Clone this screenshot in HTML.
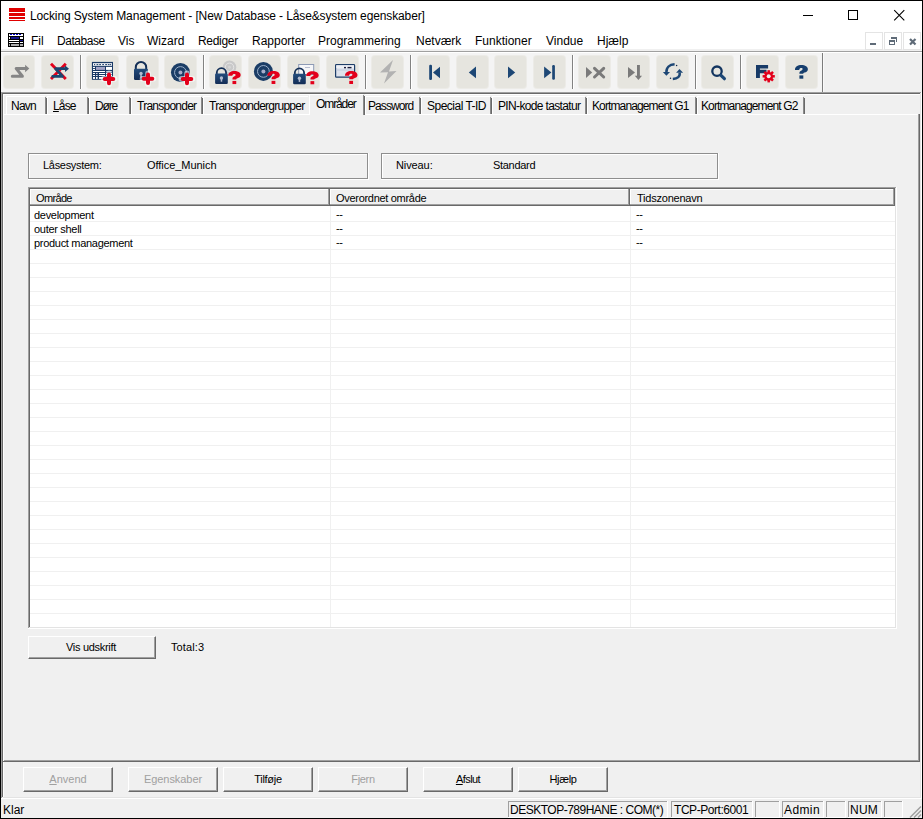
<!DOCTYPE html>
<html><head><meta charset="utf-8">
<style>
*{box-sizing:border-box}
html,body{margin:0;padding:0;width:923px;height:819px;overflow:hidden;background:#f0f0f0}
body{position:relative;font-family:"Liberation Sans",sans-serif;color:#000}
.a{position:absolute}
.t{position:absolute;white-space:pre;font-size:12px;line-height:14px}
.s{position:absolute;white-space:pre;font-size:11px;line-height:13px;letter-spacing:-0.3px}
.u{text-decoration:underline}
.gray{color:#a0a0a0}
.tb{position:absolute;top:56px;width:31px;height:32px;background:#e6e5df;border-radius:3px;box-shadow:0 0 0 1px #ecebe7}
.tb svg{position:absolute;left:0;top:0}
.sep{position:absolute;top:55px;width:1px;height:34px;background:#828282}
.tab{position:absolute;top:96px;height:18px;border-left:1px solid #fff;border-top:1px solid #fff}
.tab:after{content:"";position:absolute;right:-1px;top:0;width:2px;height:17px;background:linear-gradient(to right,#a0a0a0 0,#a0a0a0 1px,#696969 1px)}
.btn{position:absolute;background:#f0f0f0;border-top:1px solid #fff;border-left:1px solid #fff;border-right:1px solid #696969;border-bottom:1px solid #696969;box-shadow:inset -1px -1px 0 #a0a0a0}
</style></head><body>

<!-- window frame -->
<div class="a" style="left:0;top:0;width:923px;height:819px;border:1px solid #000;"></div>
<!-- title + menu white -->
<div class="a" style="left:1px;top:1px;width:921px;height:48px;background:#fff"></div>
<div class="a" style="left:1px;top:51px;width:921px;height:1px;background:#a0a0a0"></div>
<div class="a" style="left:1px;top:52px;width:921px;height:1px;background:#fff"></div>

<!-- logo -->
<div class="a" style="left:9px;top:8px;width:16px;height:4px;background:#e00000"></div>
<div class="a" style="left:9px;top:13px;width:16px;height:3px;background:#e00000"></div>
<div class="a" style="left:9px;top:17px;width:16px;height:2px;background:#e00000"></div>
<div class="a" style="left:9px;top:20px;width:16px;height:1px;background:#e00000"></div>
<div class="t" style="left:30px;top:9px;letter-spacing:-0.12px">Locking System Management - [New Database - Låse&amp;system egenskaber]</div>

<!-- window controls -->
<div class="a" style="left:803px;top:15px;width:10px;height:1px;background:#000"></div>
<div class="a" style="left:848px;top:10px;width:10px;height:10px;border:1px solid #000"></div>
<svg class="a" style="left:893px;top:9px" width="13" height="13" viewBox="0 0 13 13"><path d="M1.2 1.2L11.3 11.3M11.3 1.2L1.2 11.3" stroke="#000" stroke-width="1.1"/></svg>

<!-- menu icon -->
<svg class="a" style="left:8px;top:33px" width="16" height="14" viewBox="0 0 16 14" shape-rendering="crispEdges">
<rect x="0" y="0" width="16" height="14" fill="#000"/>
<rect x="1" y="1" width="14" height="2" fill="#fff"/>
<rect x="2" y="1" width="2" height="1" fill="#0000c8"/><rect x="5" y="1" width="2" height="1" fill="#0000c8"/><rect x="8" y="1" width="2" height="1" fill="#0000c8"/><rect x="11" y="1" width="2" height="1" fill="#0000c8"/>
<rect x="1" y="4" width="1" height="2" fill="#fff"/><rect x="3" y="4" width="8" height="2" fill="#14148c"/><rect x="12" y="4" width="3" height="2" fill="#fff"/>
<rect x="1" y="7" width="10" height="1" fill="#fff"/><rect x="12" y="7" width="3" height="1" fill="#14148c"/>
<rect x="1" y="9" width="10" height="1" fill="#fff"/><rect x="12" y="9" width="3" height="1" fill="#fff"/>
<rect x="1" y="11" width="1" height="2" fill="#aaa"/><rect x="3" y="11" width="8" height="2" fill="#aaa"/><rect x="12" y="11" width="3" height="2" fill="#aaa"/>
</svg>

<!-- menu -->
<div class="t" style="left:31px;top:34px">Fil</div>
<div class="t" style="left:57px;top:34px;letter-spacing:-0.45px">Database</div>
<div class="t" style="left:118px;top:34px">Vis</div>
<div class="t" style="left:147px;top:34px">Wizard</div>
<div class="t" style="left:198px;top:34px;letter-spacing:-0.3px">Rediger</div>
<div class="t" style="left:252px;top:34px">Rapporter</div>
<div class="t" style="left:318px;top:34px">Programmering</div>
<div class="t" style="left:416px;top:34px">Netværk</div>
<div class="t" style="left:475px;top:34px">Funktioner</div>
<div class="t" style="left:546px;top:34px">Vindue</div>
<div class="t" style="left:597px;top:34px">Hjælp</div>

<!-- MDI buttons -->
<div class="a" style="left:865px;top:32px;width:18px;height:18px;border:1px solid #e4e4e4;background:#fff"></div>
<div class="a" style="left:884px;top:32px;width:18px;height:18px;border:1px solid #e4e4e4;background:#fff"></div>
<div class="a" style="left:903px;top:32px;width:18px;height:18px;border:1px solid #e4e4e4;background:#fff"></div>
<div class="a" style="left:870px;top:43px;width:6px;height:2px;background:#5f6b78"></div>
<svg class="a" style="left:884px;top:32px" width="18" height="18" viewBox="0 0 18 18" shape-rendering="crispEdges"><rect x="7" y="5" width="6" height="2" fill="#5f6b78"/><rect x="12" y="5" width="1" height="5" fill="#5f6b78"/><rect x="5" y="8" width="6" height="2" fill="#5f6b78"/><rect x="5" y="8" width="1" height="5" fill="#5f6b78"/><rect x="10" y="8" width="1" height="5" fill="#5f6b78"/><rect x="5" y="12" width="6" height="1" fill="#5f6b78"/></svg>
<svg class="a" style="left:903px;top:32px" width="18" height="18" viewBox="0 0 18 18"><path d="M7 7L12.5 12.5M12.5 7L7 12.5" stroke="#5f6b78" stroke-width="2.2"/></svg>

<!-- toolbar area -->
<div class="a" style="left:1px;top:53px;width:821px;height:39px;background:#f4f4f4"></div>
<div class="a" style="left:822px;top:53px;width:1px;height:39px;background:#7c7c7c"></div><div class="a" style="left:823px;top:53px;width:1px;height:39px;background:#fafafa"></div>

<!-- MDI client sunken edge -->
<div class="a" style="left:1px;top:92px;width:921px;height:1px;background:#a0a0a0"></div>
<div class="a" style="left:2px;top:93px;width:919px;height:1px;background:#696969"></div>
<div class="a" style="left:1px;top:92px;width:1px;height:706px;background:#a0a0a0"></div>
<div class="a" style="left:2px;top:93px;width:1px;height:704px;background:#696969"></div>
<div class="a" style="left:3px;top:94px;width:918px;height:1px;background:#fff"></div>
<div class="a" style="left:3px;top:94px;width:1px;height:703px;background:#fff"></div>
<div class="a" style="left:921px;top:92px;width:1px;height:707px;background:#fff"></div>
<div class="a" style="left:920px;top:93px;width:1px;height:705px;background:#e3e3e3"></div>
<div class="a" style="left:3px;top:797px;width:918px;height:1px;background:#e3e3e3"></div>
<div class="a" style="left:1px;top:798px;width:921px;height:1px;background:#fff"></div>

<!-- TOOLBAR BUTTONS -->
<div class="tb" style="left:4px;width:30px"></div><svg class="a" style="left:4px;top:56px" width="31" height="32" viewBox="0 0 31 32"><path d="M8.3 20.3H18.4L12.2 12.5H22" fill="none" stroke="#858585" stroke-width="3" stroke-linecap="round" stroke-linejoin="round"/><path d="M21.1 8.8L25.3 12.5L21.1 16.2Z" fill="#858585"/></svg>
<div class="tb" style="left:42px"></div><svg class="a" style="left:42px;top:56px" width="31" height="32" viewBox="0 0 31 32"><path d="M9 7.8L23.8 23M23.8 7.8L9 23" stroke="#e3001b" stroke-width="2.9"/><path d="M10.7 20.4H20.5L13.5 12.6H23.5" fill="none" stroke="#1b466f" stroke-width="2.8" stroke-linecap="round" stroke-linejoin="round"/><path d="M23 9.4L27 12.7L23 16Z" fill="#1b466f"/></svg>
<div class="tb" style="left:87px"></div><svg class="a" style="left:87px;top:56px" width="31" height="32" viewBox="0 0 31 32"><rect x="4.9" y="5.9" width="21.1" height="17.9" fill="#1a3a66"/><rect x="6" y="7.2" width="19" height="2.6" fill="#fff"/><rect x="7" y="8.1" width="1.2" height="1" fill="#1a3a66"/><rect x="9.5" y="8.1" width="1.8" height="1" fill="#1a3a66"/><rect x="12.2" y="8.1" width="1.8" height="1" fill="#1a3a66"/><rect x="15.2" y="8.1" width="1.8" height="1" fill="#1a3a66"/><rect x="18.2" y="8.1" width="1.8" height="1" fill="#1a3a66"/><rect x="20.8" y="8.1" width="1.8" height="1" fill="#1a3a66"/><rect x="23" y="8.1" width="1.2" height="1" fill="#1a3a66"/><rect x="6" y="10.9" width="2" height="1.1" fill="#fff"/><rect x="6" y="12.9" width="2" height="1.1" fill="#fff"/><rect x="9" y="10.9" width="9" height="3" fill="#a3a4c6"/><rect x="19" y="10.9" width="6" height="3" fill="#fff"/><rect x="6" y="15" width="12" height="1" fill="#fff"/><rect x="19" y="15" width="6" height="1" fill="#a5a8c0"/><rect x="6" y="17" width="2" height="1" fill="#fff"/><rect x="9" y="17" width="1.6" height="1" fill="#dcdce8"/><rect x="12" y="17" width="6" height="1" fill="#fff"/><rect x="19" y="17" width="6" height="1" fill="#fff"/><rect x="6" y="19" width="2" height="1" fill="#fff"/><rect x="9" y="19" width="1.6" height="1" fill="#dcdce8"/><rect x="12" y="19" width="6" height="1" fill="#fff"/><rect x="19" y="19" width="6" height="1" fill="#fff"/><rect x="6" y="21" width="2" height="1.9" fill="#fff"/><rect x="9" y="21" width="1.6" height="1.9" fill="#fff"/><rect x="12" y="21" width="6" height="1.9" fill="#fff"/><rect x="19" y="21" width="6" height="1.9" fill="#fff"/><path d="M16.5 22.9h11M22 17.4v11" stroke="#fff" stroke-width="5.6" stroke-linecap="round" opacity=".55"/><path d="M17.7 22.9h8.6M22 18.599999999999998v8.6" stroke="#e3001b" stroke-width="4" stroke-linecap="round"/></svg>
<div class="tb" style="left:127px"></div><svg class="a" style="left:127px;top:56px" width="31" height="32" viewBox="0 0 31 32"><path d="M8.8 13.2V11.2A5.2 5.2 0 0 1 19.2 11.2V13.2" fill="none" stroke="#132f57" stroke-width="2.0"/><linearGradient id="lg70127" x1="0" y1="0" x2="0" y2="1"><stop offset="0" stop-color="#234c7c"/><stop offset="1" stop-color="#132d55"/></linearGradient><rect x="7" y="12.7" width="14" height="11.3" rx="1.2" fill="url(#lg70127)"/><circle cx="14.0" cy="17.558999999999997" r="1.7" fill="#b4bccf"/><rect x="13.25" y="17.785" width="1.5" height="3.7290000000000005" fill="#b4bccf"/><path d="M15.5 22.8h11M21 17.3v11" stroke="#fff" stroke-width="5.6" stroke-linecap="round" opacity=".55"/><path d="M16.7 22.8h8.6M21 18.5v8.6" stroke="#e3001b" stroke-width="4" stroke-linecap="round"/></svg>
<div class="tb" style="left:165px"></div><svg class="a" style="left:165px;top:56px" width="31" height="32" viewBox="0 0 31 32"><circle cx="15.45" cy="16.5" r="9.5" fill="#1b3d66"/><circle cx="15.45" cy="16.5" r="5.89" fill="none" stroke="#9cb0ca" stroke-width="1"/><circle cx="15.45" cy="16.5" r="1.9949999999999999" fill="#a9aecb"/><path d="M16.5 22.9h11M22 17.4v11" stroke="#fff" stroke-width="5.6" stroke-linecap="round" opacity=".55"/><path d="M17.7 22.9h8.6M22 18.599999999999998v8.6" stroke="#e3001b" stroke-width="4" stroke-linecap="round"/></svg>
<div class="tb" style="left:210px"></div><svg class="a" style="left:210px;top:56px" width="31" height="32" viewBox="0 0 31 32"><circle cx="19.5" cy="11.3" r="6.8" fill="#c9c9c9"/><circle cx="19.5" cy="11.3" r="4.216" fill="none" stroke="#e6e6e6" stroke-width="1"/><circle cx="19.5" cy="11.3" r="1.428" fill="#d6d6d6"/><path d="M6.8 18.1V16.85A4.6499999999999995 4.6499999999999995 0 0 1 16.099999999999998 16.85V18.1" fill="none" stroke="#132f57" stroke-width="1.8"/><linearGradient id="lg51176" x1="0" y1="0" x2="0" y2="1"><stop offset="0" stop-color="#234c7c"/><stop offset="1" stop-color="#132d55"/></linearGradient><rect x="5.1" y="17.6" width="12.7" height="10.4" rx="1.2" fill="url(#lg51176)"/><circle cx="11.45" cy="22.072000000000003" r="1.7" fill="#b4bccf"/><rect x="10.7" y="22.28" width="1.5" height="3.4320000000000004" fill="#b4bccf"/><g transform="translate(18.2,15) scale(0.97,0.955)"><path d="M0 5C-0.2 1.8 2.8 0 6.3 0C10.2 0 12.9 1.7 12.9 4.2C12.9 6.2 11.3 7.1 9.6 7.6C8.6 7.9 8.3 8.2 8.3 8.8H4.4V8C4.4 6.6 5.2 6 6.5 5.4C7.3 5 7.6 4.6 7.6 4.1C7.6 3.5 7.1 3.1 6.3 3.1C5.2 3.1 4.4 3.7 4.2 5Z" fill="#e3001b"/><rect x="4.4" y="10.4" width="3.9" height="3.3" fill="#e3001b"/></g></svg>
<div class="tb" style="left:249px"></div><svg class="a" style="left:249px;top:56px" width="31" height="32" viewBox="0 0 31 32"><circle cx="14.4" cy="15.4" r="9.5" fill="#1b3d66"/><circle cx="14.4" cy="15.4" r="5.89" fill="none" stroke="#9cb0ca" stroke-width="1"/><circle cx="14.4" cy="15.4" r="1.9949999999999999" fill="#a9aecb"/><g transform="translate(18.3,14.9) scale(0.97,0.955)"><path d="M0 5C-0.2 1.8 2.8 0 6.3 0C10.2 0 12.9 1.7 12.9 4.2C12.9 6.2 11.3 7.1 9.6 7.6C8.6 7.9 8.3 8.2 8.3 8.8H4.4V8C4.4 6.6 5.2 6 6.5 5.4C7.3 5 7.6 4.6 7.6 4.1C7.6 3.5 7.1 3.1 6.3 3.1C5.2 3.1 4.4 3.7 4.2 5Z" fill="#e3001b"/><rect x="4.4" y="10.4" width="3.9" height="3.3" fill="#e3001b"/></g></svg>
<div class="tb" style="left:288px"></div><svg class="a" style="left:288px;top:56px" width="31" height="32" viewBox="0 0 31 32"><rect x="10.7" y="8.5" width="15" height="10" fill="#f6f6f8" stroke="#8d9ab5" stroke-width="1"/><rect x="17" y="11" width="5" height="1" fill="#b8bdd0"/><path d="M6.8 18.3V17.05A4.6499999999999995 4.6499999999999995 0 0 1 16.099999999999998 17.05V18.3" fill="none" stroke="#132f57" stroke-width="1.8"/><linearGradient id="lg51178" x1="0" y1="0" x2="0" y2="1"><stop offset="0" stop-color="#234c7c"/><stop offset="1" stop-color="#132d55"/></linearGradient><rect x="5.1" y="17.8" width="12.7" height="10.4" rx="1.2" fill="url(#lg51178)"/><circle cx="11.45" cy="22.272000000000002" r="1.7" fill="#b4bccf"/><rect x="10.7" y="22.48" width="1.5" height="3.4320000000000004" fill="#b4bccf"/><g transform="translate(18.2,15.2) scale(0.97,0.955)"><path d="M0 5C-0.2 1.8 2.8 0 6.3 0C10.2 0 12.9 1.7 12.9 4.2C12.9 6.2 11.3 7.1 9.6 7.6C8.6 7.9 8.3 8.2 8.3 8.8H4.4V8C4.4 6.6 5.2 6 6.5 5.4C7.3 5 7.6 4.6 7.6 4.1C7.6 3.5 7.1 3.1 6.3 3.1C5.2 3.1 4.4 3.7 4.2 5Z" fill="#e3001b"/><rect x="4.4" y="10.4" width="3.9" height="3.3" fill="#e3001b"/></g></svg>
<div class="tb" style="left:327px"></div><svg class="a" style="left:327px;top:56px" width="31" height="32" viewBox="0 0 31 32"><rect x="8.6" y="8.6" width="19" height="12.6" rx="0.8" fill="#dde2ec" stroke="#1d3d68" stroke-width="1.2"/><rect x="9.3" y="9.3" width="17.6" height="2.8" fill="#eef0f5"/><rect x="9.3" y="13.5" width="17.6" height="1" fill="#c2cadb"/><rect x="17" y="10.9" width="2" height="1.4" fill="#1a1a3a"/><rect x="20.5" y="10.9" width="4" height="1.4" fill="#1a1a3a"/><g transform="translate(18,14.9) scale(0.97,0.955)"><path d="M0 5C-0.2 1.8 2.8 0 6.3 0C10.2 0 12.9 1.7 12.9 4.2C12.9 6.2 11.3 7.1 9.6 7.6C8.6 7.9 8.3 8.2 8.3 8.8H4.4V8C4.4 6.6 5.2 6 6.5 5.4C7.3 5 7.6 4.6 7.6 4.1C7.6 3.5 7.1 3.1 6.3 3.1C5.2 3.1 4.4 3.7 4.2 5Z" fill="#e3001b"/><rect x="4.4" y="10.4" width="3.9" height="3.3" fill="#e3001b"/></g></svg>
<div class="tb" style="left:372px"></div><svg class="a" style="left:372px;top:56px" width="31" height="32" viewBox="0 0 31 32"><path d="M21 4L8 16.5L16 16.2L12 27.5L24.5 15L17 15.4Z" fill="#b2b2b2"/></svg>
<div class="tb" style="left:418px"></div><svg class="a" style="left:418px;top:56px" width="31" height="32" viewBox="0 0 31 32"><rect x="11.2" y="8.8" width="2.8" height="15.2" rx="1.2" fill="#1d4775"/><path d="M15 16.5L22 10.8V22.2Z" fill="#1d4775"/></svg>
<div class="tb" style="left:457px"></div><svg class="a" style="left:457px;top:56px" width="31" height="32" viewBox="0 0 31 32"><path d="M11.8 16.5L19 10.6V22.3Z" fill="#1d4775"/></svg>
<div class="tb" style="left:495px"></div><svg class="a" style="left:495px;top:56px" width="31" height="32" viewBox="0 0 31 32"><path d="M13 10.6L20.2 16.5L13 22.3Z" fill="#1d4775"/></svg>
<div class="tb" style="left:534px"></div><svg class="a" style="left:534px;top:56px" width="31" height="32" viewBox="0 0 31 32"><path d="M10.1 10.6L17.4 16.5L10.1 22.3Z" fill="#1d4775"/><rect x="18.2" y="9.1" width="2.7" height="14.6" rx="1.2" fill="#1d4775"/></svg>
<div class="tb" style="left:579px"></div><svg class="a" style="left:579px;top:56px" width="31" height="32" viewBox="0 0 31 32"><path d="M7 11L13.2 16.5L7 22Z" fill="#7a7a7a"/><path d="M15.5 12.3L24.7 21M24.7 12.3L15.5 21" stroke="#7a7a7a" stroke-width="3" stroke-linecap="round"/></svg>
<div class="tb" style="left:618px"></div><svg class="a" style="left:618px;top:56px" width="31" height="32" viewBox="0 0 31 32"><path d="M10 11L17 16.5L10 22Z" fill="#7a7a7a"/><rect x="19" y="9" width="2.9" height="11.5" fill="#7a7a7a"/><path d="M16.8 19.8H24L20.45 24Z" fill="#7a7a7a"/></svg>
<div class="tb" style="left:657px"></div><svg class="a" style="left:657px;top:56px" width="31" height="32" viewBox="0 0 31 32"><path d="M17.6 8.3C12.6 8.6 9.1 11.4 9.4 16.4" fill="none" stroke="#1d4775" stroke-width="2.5"/><path d="M5.9 16.1H13L9.4 19.8Z" fill="#1d4775"/><path d="M15.8 23C20.6 22.6 23.4 20.3 22.6 16.8" fill="none" stroke="#1d4775" stroke-width="2.5"/><path d="M19.1 16.8H26.1L22.5 13Z" fill="#1d4775"/><circle cx="19.6" cy="9.4" r=".75" fill="#12284a"/><circle cx="13.5" cy="22.3" r=".75" fill="#12284a"/></svg>
<div class="tb" style="left:702px"></div><svg class="a" style="left:702px;top:56px" width="31" height="32" viewBox="0 0 31 32"><circle cx="15" cy="15.2" r="4.7" fill="none" stroke="#12345f" stroke-width="2.3"/><path d="M19 19.3L22.4 22.7" stroke="#1d4775" stroke-width="3.2" stroke-linecap="round"/></svg>
<div class="tb" style="left:747px"></div><svg class="a" style="left:747px;top:56px" width="31" height="32" viewBox="0 0 31 32"><path d="M9 9H21.1V12.5H12.9V13.7H19.5V17.2H12.9V21.9H9Z" fill="#173a66"/><circle cx="21.7" cy="20.3" r="4.4" fill="#e3001b"/><rect x="20.45" y="14.200000000000001" width="2.5" height="3" fill="#e3001b" transform="rotate(0 21.7 20.3)"/><rect x="20.45" y="14.200000000000001" width="2.5" height="3" fill="#e3001b" transform="rotate(45 21.7 20.3)"/><rect x="20.45" y="14.200000000000001" width="2.5" height="3" fill="#e3001b" transform="rotate(90 21.7 20.3)"/><rect x="20.45" y="14.200000000000001" width="2.5" height="3" fill="#e3001b" transform="rotate(135 21.7 20.3)"/><rect x="20.45" y="14.200000000000001" width="2.5" height="3" fill="#e3001b" transform="rotate(180 21.7 20.3)"/><rect x="20.45" y="14.200000000000001" width="2.5" height="3" fill="#e3001b" transform="rotate(225 21.7 20.3)"/><rect x="20.45" y="14.200000000000001" width="2.5" height="3" fill="#e3001b" transform="rotate(270 21.7 20.3)"/><rect x="20.45" y="14.200000000000001" width="2.5" height="3" fill="#e3001b" transform="rotate(315 21.7 20.3)"/><circle cx="21.7" cy="20.3" r="2" fill="#eef2ee"/></svg>
<div class="tb" style="left:786px"></div><svg class="a" style="left:786px;top:56px" width="31" height="32" viewBox="0 0 31 32"><g transform="translate(9,9) scale(1.0,1.0)"><path d="M0 5C-0.2 1.8 2.8 0 6.3 0C10.2 0 12.9 1.7 12.9 4.2C12.9 6.2 11.3 7.1 9.6 7.6C8.6 7.9 8.3 8.2 8.3 8.8H4.4V8C4.4 6.6 5.2 6 6.5 5.4C7.3 5 7.6 4.6 7.6 4.1C7.6 3.5 7.1 3.1 6.3 3.1C5.2 3.1 4.4 3.7 4.2 5Z" fill="#173f6e"/><rect x="4.4" y="10.4" width="3.9" height="3.3" fill="#173f6e"/></g></svg>
<div class="sep" style="left:80px"></div><div class="sep" style="left:81px;background:#fff"></div>
<div class="sep" style="left:203px"></div><div class="sep" style="left:204px;background:#fff"></div>
<div class="sep" style="left:365px"></div><div class="sep" style="left:366px;background:#fff"></div>
<div class="sep" style="left:410px"></div><div class="sep" style="left:411px;background:#fff"></div>
<div class="sep" style="left:572px"></div><div class="sep" style="left:573px;background:#fff"></div>
<div class="sep" style="left:695px"></div><div class="sep" style="left:696px;background:#fff"></div>
<div class="sep" style="left:740px"></div><div class="sep" style="left:741px;background:#fff"></div>

<!-- TABS -->
<div class="a" style="left:3px;top:114px;width:916px;height:1px;background:#fff"></div>
<div class="a" style="left:6px;top:96px;width:41px;height:18px;background:#f0f0f0"></div>
<div class="a" style="left:6px;top:96px;width:39px;height:1px;background:#fff"></div>
<div class="a" style="left:6px;top:97px;width:1px;height:17px;background:#fff"></div>
<div class="a" style="left:45px;top:97px;width:1px;height:17px;background:#8a8a8a"></div>
<div class="a" style="left:46px;top:98px;width:1px;height:16px;background:#696969"></div>
<div class="t" style="left:11px;top:99px;letter-spacing:-0.75px">Navn</div>
<div class="a" style="left:47px;top:96px;width:42px;height:18px;background:#f0f0f0"></div>
<div class="a" style="left:47px;top:96px;width:40px;height:1px;background:#fff"></div>
<div class="a" style="left:47px;top:97px;width:1px;height:17px;background:#fff"></div>
<div class="a" style="left:87px;top:97px;width:1px;height:17px;background:#8a8a8a"></div>
<div class="a" style="left:88px;top:98px;width:1px;height:16px;background:#696969"></div>
<div class="t" style="left:53px;top:99px;letter-spacing:-0.85px"><span class=u>L</span>åse</div>
<div class="a" style="left:89px;top:96px;width:42px;height:18px;background:#f0f0f0"></div>
<div class="a" style="left:89px;top:96px;width:40px;height:1px;background:#fff"></div>
<div class="a" style="left:89px;top:97px;width:1px;height:17px;background:#fff"></div>
<div class="a" style="left:129px;top:97px;width:1px;height:17px;background:#8a8a8a"></div>
<div class="a" style="left:130px;top:98px;width:1px;height:16px;background:#696969"></div>
<div class="t" style="left:95px;top:99px;letter-spacing:-1.15px">Døre</div>
<div class="a" style="left:131px;top:96px;width:72px;height:18px;background:#f0f0f0"></div>
<div class="a" style="left:131px;top:96px;width:70px;height:1px;background:#fff"></div>
<div class="a" style="left:131px;top:97px;width:1px;height:17px;background:#fff"></div>
<div class="a" style="left:201px;top:97px;width:1px;height:17px;background:#8a8a8a"></div>
<div class="a" style="left:202px;top:98px;width:1px;height:16px;background:#696969"></div>
<div class="t" style="left:137px;top:99px;letter-spacing:-0.75px">Transponder</div>
<div class="a" style="left:203px;top:96px;width:107px;height:18px;background:#f0f0f0"></div>
<div class="a" style="left:203px;top:96px;width:105px;height:1px;background:#fff"></div>
<div class="a" style="left:203px;top:97px;width:1px;height:17px;background:#fff"></div>
<div class="t" style="left:209px;top:99px;letter-spacing:-0.75px">Transpondergrupper</div>
<div class="a" style="left:365px;top:96px;width:56px;height:18px;background:#f0f0f0"></div>
<div class="a" style="left:365px;top:96px;width:54px;height:1px;background:#fff"></div>
<div class="a" style="left:365px;top:97px;width:1px;height:17px;background:#fff"></div>
<div class="a" style="left:419px;top:97px;width:1px;height:17px;background:#8a8a8a"></div>
<div class="a" style="left:420px;top:98px;width:1px;height:16px;background:#696969"></div>
<div class="t" style="left:368px;top:99px;letter-spacing:-0.92px">Password</div>
<div class="a" style="left:421px;top:96px;width:71px;height:18px;background:#f0f0f0"></div>
<div class="a" style="left:421px;top:96px;width:69px;height:1px;background:#fff"></div>
<div class="a" style="left:421px;top:97px;width:1px;height:17px;background:#fff"></div>
<div class="a" style="left:490px;top:97px;width:1px;height:17px;background:#8a8a8a"></div>
<div class="a" style="left:491px;top:98px;width:1px;height:16px;background:#696969"></div>
<div class="t" style="left:427px;top:99px;letter-spacing:-0.51px">Special T-ID</div>
<div class="a" style="left:492px;top:96px;width:95px;height:18px;background:#f0f0f0"></div>
<div class="a" style="left:492px;top:96px;width:93px;height:1px;background:#fff"></div>
<div class="a" style="left:492px;top:97px;width:1px;height:17px;background:#fff"></div>
<div class="a" style="left:585px;top:97px;width:1px;height:17px;background:#8a8a8a"></div>
<div class="a" style="left:586px;top:98px;width:1px;height:16px;background:#696969"></div>
<div class="t" style="left:498px;top:99px;letter-spacing:-0.65px">PIN-kode tastatur</div>
<div class="a" style="left:587px;top:96px;width:110px;height:18px;background:#f0f0f0"></div>
<div class="a" style="left:587px;top:96px;width:108px;height:1px;background:#fff"></div>
<div class="a" style="left:587px;top:97px;width:1px;height:17px;background:#fff"></div>
<div class="a" style="left:695px;top:97px;width:1px;height:17px;background:#8a8a8a"></div>
<div class="a" style="left:696px;top:98px;width:1px;height:16px;background:#696969"></div>
<div class="t" style="left:592px;top:99px;letter-spacing:-0.88px">Kortmanagement G1</div>
<div class="a" style="left:697px;top:96px;width:108px;height:18px;background:#f0f0f0"></div>
<div class="a" style="left:697px;top:96px;width:106px;height:1px;background:#fff"></div>
<div class="a" style="left:697px;top:97px;width:1px;height:17px;background:#fff"></div>
<div class="a" style="left:803px;top:97px;width:1px;height:17px;background:#8a8a8a"></div>
<div class="a" style="left:804px;top:98px;width:1px;height:16px;background:#696969"></div>
<div class="t" style="left:701px;top:99px;letter-spacing:-0.88px">Kortmanagement G2</div>
<div class="a" style="left:309px;top:94px;width:56px;height:21px;background:#f0f0f0"></div>
<div class="a" style="left:309px;top:94px;width:54px;height:1px;background:#fff"></div>
<div class="a" style="left:309px;top:94px;width:1px;height:21px;background:#fff"></div>
<div class="a" style="left:363px;top:95px;width:1px;height:20px;background:#8a8a8a"></div>
<div class="a" style="left:364px;top:96px;width:1px;height:19px;background:#696969"></div>
<div class="t" style="left:316px;top:97px;letter-spacing:-1.1px">Områder</div>

<!-- CONTENT -->
<div class="a" style="left:918px;top:114px;width:1px;height:647px;background:#a0a0a0"></div>
<div class="a" style="left:919px;top:114px;width:1px;height:648px;background:#696969"></div>
<div class="a" style="left:4px;top:760px;width:915px;height:1px;background:#a0a0a0"></div>
<div class="a" style="left:3px;top:761px;width:917px;height:1px;background:#696969"></div>
<div class="a" style="left:28px;top:153px;width:339px;height:1px;background:#8e8e8e"></div>
<div class="a" style="left:28px;top:153px;width:1px;height:25px;background:#8e8e8e"></div>
<div class="a" style="left:28px;top:178px;width:340px;height:1px;background:#8e8e8e"></div>
<div class="a" style="left:367px;top:153px;width:1px;height:26px;background:#8e8e8e"></div>
<div class="a" style="left:29px;top:154px;width:338px;height:1px;background:#fff"></div>
<div class="a" style="left:29px;top:154px;width:1px;height:24px;background:#fff"></div>
<div class="a" style="left:28px;top:179px;width:341px;height:1px;background:#fff"></div>
<div class="a" style="left:368px;top:153px;width:1px;height:27px;background:#fff"></div>
<div class="a" style="left:381px;top:153px;width:336px;height:1px;background:#8e8e8e"></div>
<div class="a" style="left:381px;top:153px;width:1px;height:25px;background:#8e8e8e"></div>
<div class="a" style="left:381px;top:178px;width:337px;height:1px;background:#8e8e8e"></div>
<div class="a" style="left:717px;top:153px;width:1px;height:26px;background:#8e8e8e"></div>
<div class="a" style="left:382px;top:154px;width:335px;height:1px;background:#fff"></div>
<div class="a" style="left:382px;top:154px;width:1px;height:24px;background:#fff"></div>
<div class="a" style="left:381px;top:179px;width:338px;height:1px;background:#fff"></div>
<div class="a" style="left:718px;top:153px;width:1px;height:27px;background:#fff"></div>
<div class="s" style="left:43px;top:159px;">Låsesystem:</div>
<div class="s" style="left:147px;top:159px;letter-spacing:-0.05px">Office_Munich</div>
<div class="s" style="left:396px;top:159px;letter-spacing:-0.1px">Niveau:</div>
<div class="s" style="left:493px;top:159px;">Standard</div>
<div class="a" style="left:28px;top:187px;width:868px;height:1px;background:#a0a0a0"></div>
<div class="a" style="left:28px;top:187px;width:1px;height:441px;background:#a0a0a0"></div>
<div class="a" style="left:29px;top:188px;width:866px;height:1px;background:#696969"></div>
<div class="a" style="left:29px;top:188px;width:1px;height:439px;background:#696969"></div>
<div class="a" style="left:28px;top:628px;width:869px;height:1px;background:#fff"></div>
<div class="a" style="left:896px;top:187px;width:1px;height:442px;background:#fff"></div>
<div class="a" style="left:29px;top:627px;width:867px;height:1px;background:#e3e3e3"></div>
<div class="a" style="left:895px;top:188px;width:1px;height:440px;background:#e3e3e3"></div>
<div class="a" style="left:30px;top:206px;width:865px;height:421px;background:#fff"></div>
<div class="a" style="left:30px;top:189px;width:300px;height:17px;background:#f0f0f0"></div>
<div class="a" style="left:30px;top:189px;width:299px;height:1px;background:#fff"></div>
<div class="a" style="left:30px;top:189px;width:1px;height:16px;background:#fff"></div>
<div class="a" style="left:30px;top:204px;width:300px;height:1px;background:#a0a0a0"></div>
<div class="a" style="left:328px;top:189px;width:1px;height:16px;background:#a0a0a0"></div>
<div class="a" style="left:30px;top:205px;width:300px;height:1px;background:#696969"></div>
<div class="a" style="left:329px;top:189px;width:1px;height:17px;background:#696969"></div>
<div class="a" style="left:330px;top:189px;width:300px;height:17px;background:#f0f0f0"></div>
<div class="a" style="left:330px;top:189px;width:299px;height:1px;background:#fff"></div>
<div class="a" style="left:330px;top:189px;width:1px;height:16px;background:#fff"></div>
<div class="a" style="left:330px;top:204px;width:300px;height:1px;background:#a0a0a0"></div>
<div class="a" style="left:628px;top:189px;width:1px;height:16px;background:#a0a0a0"></div>
<div class="a" style="left:330px;top:205px;width:300px;height:1px;background:#696969"></div>
<div class="a" style="left:629px;top:189px;width:1px;height:17px;background:#696969"></div>
<div class="a" style="left:630px;top:189px;width:265px;height:17px;background:#f0f0f0"></div>
<div class="a" style="left:630px;top:189px;width:264px;height:1px;background:#fff"></div>
<div class="a" style="left:630px;top:189px;width:1px;height:16px;background:#fff"></div>
<div class="a" style="left:630px;top:204px;width:265px;height:1px;background:#a0a0a0"></div>
<div class="a" style="left:893px;top:189px;width:1px;height:16px;background:#a0a0a0"></div>
<div class="a" style="left:630px;top:205px;width:265px;height:1px;background:#696969"></div>
<div class="a" style="left:894px;top:189px;width:1px;height:17px;background:#696969"></div>
<div class="s" style="left:36px;top:192px;letter-spacing:-0.65px">Område</div>
<div class="s" style="left:336px;top:192px;letter-spacing:-0.3px">Overordnet område</div>
<div class="s" style="left:637px;top:192px;letter-spacing:-0.22px">Tidszonenavn</div>
<div class="a" style="left:30px;top:221px;width:865px;height:1px;background:#f0f0f0"></div>
<div class="a" style="left:30px;top:235px;width:865px;height:1px;background:#f0f0f0"></div>
<div class="a" style="left:30px;top:249px;width:865px;height:1px;background:#f0f0f0"></div>
<div class="a" style="left:30px;top:263px;width:865px;height:1px;background:#f0f0f0"></div>
<div class="a" style="left:30px;top:277px;width:865px;height:1px;background:#f0f0f0"></div>
<div class="a" style="left:30px;top:291px;width:865px;height:1px;background:#f0f0f0"></div>
<div class="a" style="left:30px;top:305px;width:865px;height:1px;background:#f0f0f0"></div>
<div class="a" style="left:30px;top:319px;width:865px;height:1px;background:#f0f0f0"></div>
<div class="a" style="left:30px;top:333px;width:865px;height:1px;background:#f0f0f0"></div>
<div class="a" style="left:30px;top:347px;width:865px;height:1px;background:#f0f0f0"></div>
<div class="a" style="left:30px;top:361px;width:865px;height:1px;background:#f0f0f0"></div>
<div class="a" style="left:30px;top:375px;width:865px;height:1px;background:#f0f0f0"></div>
<div class="a" style="left:30px;top:389px;width:865px;height:1px;background:#f0f0f0"></div>
<div class="a" style="left:30px;top:403px;width:865px;height:1px;background:#f0f0f0"></div>
<div class="a" style="left:30px;top:417px;width:865px;height:1px;background:#f0f0f0"></div>
<div class="a" style="left:30px;top:431px;width:865px;height:1px;background:#f0f0f0"></div>
<div class="a" style="left:30px;top:445px;width:865px;height:1px;background:#f0f0f0"></div>
<div class="a" style="left:30px;top:459px;width:865px;height:1px;background:#f0f0f0"></div>
<div class="a" style="left:30px;top:473px;width:865px;height:1px;background:#f0f0f0"></div>
<div class="a" style="left:30px;top:487px;width:865px;height:1px;background:#f0f0f0"></div>
<div class="a" style="left:30px;top:501px;width:865px;height:1px;background:#f0f0f0"></div>
<div class="a" style="left:30px;top:515px;width:865px;height:1px;background:#f0f0f0"></div>
<div class="a" style="left:30px;top:529px;width:865px;height:1px;background:#f0f0f0"></div>
<div class="a" style="left:30px;top:543px;width:865px;height:1px;background:#f0f0f0"></div>
<div class="a" style="left:30px;top:557px;width:865px;height:1px;background:#f0f0f0"></div>
<div class="a" style="left:30px;top:571px;width:865px;height:1px;background:#f0f0f0"></div>
<div class="a" style="left:30px;top:585px;width:865px;height:1px;background:#f0f0f0"></div>
<div class="a" style="left:30px;top:599px;width:865px;height:1px;background:#f0f0f0"></div>
<div class="a" style="left:30px;top:613px;width:865px;height:1px;background:#f0f0f0"></div>
<div class="a" style="left:330px;top:206px;width:1px;height:421px;background:#f0f0f0"></div>
<div class="a" style="left:630px;top:206px;width:1px;height:421px;background:#f0f0f0"></div>
<div class="s" style="left:34px;top:209px;">development</div>
<div class="s" style="left:336px;top:208px;">--</div>
<div class="s" style="left:636px;top:208px;">--</div>
<div class="s" style="left:34px;top:223px;">outer shell</div>
<div class="s" style="left:336px;top:222px;">--</div>
<div class="s" style="left:636px;top:222px;">--</div>
<div class="s" style="left:34px;top:237px;">product management</div>
<div class="s" style="left:336px;top:236px;">--</div>
<div class="s" style="left:636px;top:236px;">--</div>
<div class="btn" style="left:28px;top:636px;width:128px;height:23px"></div>
<div class="s" style="left:66px;top:641px;">Vis udskrift</div>
<div class="s" style="left:171px;top:641px;letter-spacing:0.1px">Total:3</div>
<div class="btn" style="left:23px;top:767px;width:90px;height:25px"></div>
<div class="s gray" style="left:23px;top:773px;width:90px;text-align:center;letter-spacing:0px"><span class=u>A</span>nvend</div>
<div class="btn" style="left:128px;top:767px;width:90px;height:25px"></div>
<div class="s gray" style="left:128px;top:773px;width:90px;text-align:center;letter-spacing:-0.05px">Egenskaber</div>
<div class="btn" style="left:223px;top:767px;width:90px;height:25px"></div>
<div class="s" style="left:223px;top:773px;width:90px;text-align:center;letter-spacing:-0.3px">Tilføje</div>
<div class="btn" style="left:318px;top:767px;width:90px;height:25px"></div>
<div class="s gray" style="left:318px;top:773px;width:90px;text-align:center;letter-spacing:-0.3px">F<span class=u>j</span>ern</div>
<div class="btn" style="left:423px;top:767px;width:90px;height:25px"></div>
<div class="s" style="left:423px;top:773px;width:90px;text-align:center;letter-spacing:-0.55px"><span class=u>A</span>fslut</div>
<div class="btn" style="left:518px;top:767px;width:90px;height:25px"></div>
<div class="s" style="left:518px;top:773px;width:90px;text-align:center;letter-spacing:-0.3px">Hjælp</div>

<!-- status bar -->
<div class="t" style="left:3px;top:803px">Klar</div>
<div class="a" style="left:508px;top:801px;width:159px;height:1px;background:#a0a0a0"></div>
<div class="a" style="left:508px;top:801px;width:1px;height:16px;background:#a0a0a0"></div>
<div class="a" style="left:667px;top:801px;width:1px;height:17px;background:#fff"></div>
<div class="a" style="left:508px;top:817px;width:160px;height:1px;background:#fff"></div>
<div class="a" style="left:671px;top:801px;width:81px;height:1px;background:#a0a0a0"></div>
<div class="a" style="left:671px;top:801px;width:1px;height:16px;background:#a0a0a0"></div>
<div class="a" style="left:752px;top:801px;width:1px;height:17px;background:#fff"></div>
<div class="a" style="left:671px;top:817px;width:82px;height:1px;background:#fff"></div>
<div class="a" style="left:755px;top:801px;width:24px;height:1px;background:#a0a0a0"></div>
<div class="a" style="left:755px;top:801px;width:1px;height:16px;background:#a0a0a0"></div>
<div class="a" style="left:779px;top:801px;width:1px;height:17px;background:#fff"></div>
<div class="a" style="left:755px;top:817px;width:25px;height:1px;background:#fff"></div>
<div class="a" style="left:782px;top:801px;width:41px;height:1px;background:#a0a0a0"></div>
<div class="a" style="left:782px;top:801px;width:1px;height:16px;background:#a0a0a0"></div>
<div class="a" style="left:823px;top:801px;width:1px;height:17px;background:#fff"></div>
<div class="a" style="left:782px;top:817px;width:42px;height:1px;background:#fff"></div>
<div class="a" style="left:826px;top:801px;width:19px;height:1px;background:#a0a0a0"></div>
<div class="a" style="left:826px;top:801px;width:1px;height:16px;background:#a0a0a0"></div>
<div class="a" style="left:845px;top:801px;width:1px;height:17px;background:#fff"></div>
<div class="a" style="left:826px;top:817px;width:20px;height:1px;background:#fff"></div>
<div class="a" style="left:848px;top:801px;width:33px;height:1px;background:#a0a0a0"></div>
<div class="a" style="left:848px;top:801px;width:1px;height:16px;background:#a0a0a0"></div>
<div class="a" style="left:881px;top:801px;width:1px;height:17px;background:#fff"></div>
<div class="a" style="left:848px;top:817px;width:34px;height:1px;background:#fff"></div>
<div class="a" style="left:884px;top:801px;width:18px;height:1px;background:#a0a0a0"></div>
<div class="a" style="left:884px;top:801px;width:1px;height:16px;background:#a0a0a0"></div>
<div class="a" style="left:902px;top:801px;width:1px;height:17px;background:#fff"></div>
<div class="a" style="left:884px;top:817px;width:19px;height:1px;background:#fff"></div>
<div class="t" style="left:510px;top:803px;letter-spacing:-0.5px">DESKTOP-789HANE : COM(*)</div>
<div class="t" style="left:674px;top:803px;letter-spacing:-0.45px">TCP-Port:6001</div>
<div class="t" style="left:784px;top:803px;letter-spacing:0.4px">Admin</div>
<div class="t" style="left:850px;top:803px;letter-spacing:0.25px">NUM</div>
<svg class="a" style="left:905px;top:801px" width="17" height="17" viewBox="0 0 17 17"><path d="M5 16.5L16 5.5M9 16.5L16 9.5M13 16.5L16 13.5" stroke="#a0a0a0" stroke-width="1.5"/></svg>
</body></html>
